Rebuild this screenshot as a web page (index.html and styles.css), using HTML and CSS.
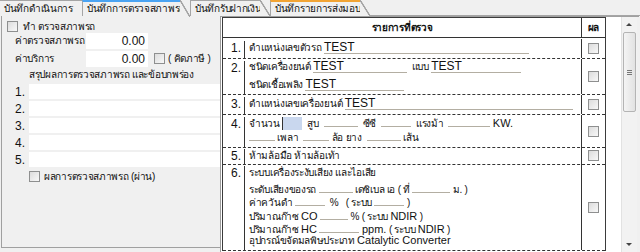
FILE: index.html
```html
<!DOCTYPE html>
<html lang="th">
<head>
    <meta charset="UTF-8">
    <title>บันทึกการตรวจสภาพรถ</title>
    <link rel="stylesheet" href="styles.css">
</head>
<body>

    <div class="tabs">
        <div class="tab tab-first">บันทึกดำเนินการ</div>
        <div class="tab tab-active">บันทึกการตรวจสภาพรถ</div>
        <div class="tab tab-third">บันทึกรับฝากเงิน</div>
        <div class="tab tab-last">บันทึกรายการส่งมอบ</div>
    </div>

    <div class="main">
        <!-- left side: fees and summary -->
        <div class="left">
            <div class="check-row">
                <span class="box"></span>
                <span>ทำ ตรวจสภาพรถ</span>
            </div>
            <div class="fee-row">
                <span class="fee-label">ค่าตรวจสภาพรถ</span>
                <span class="money">0.00</span>
            </div>
            <div class="fee-row">
                <span class="fee-label">ค่าบริการ</span>
                <span class="money">0.00</span>
                <span class="box box-tax"></span>
                <span>( คิดภาษี )</span>
            </div>
            <div class="summary-title">สรุปผลการตรวจสภาพรถ และข้อบกพร่อง</div>
            <div class="note-row"><span class="note-no">1.</span><span class="note"></span></div>
            <div class="note-row"><span class="note-no">2.</span><span class="note"></span></div>
            <div class="note-row"><span class="note-no">3.</span><span class="note"></span></div>
            <div class="note-row"><span class="note-no">4.</span><span class="note"></span></div>
            <div class="note-row"><span class="note-no">5.</span><span class="note"></span></div>
            <div class="check-row pass-row">
                <span class="box"></span>
                <span>ผลการตรวจสภาพรถ (ผ่าน)</span>
            </div>
        </div>

        <!-- right side: inspection sheet -->
        <div class="right">
            <div class="sheet">
                <div class="grid">
                    <div class="row row-head">
                        <div class="head-title">รายการที่ตรวจ</div>
                        <div class="res">ผล</div>
                    </div>
                    <div class="row row-1">
                        <div class="no">1.</div>
                        <div class="txt">
                            <div class="line">ตำแหน่งเลขตัวรถ <span class="u w205">TEST</span></div>
                        </div>
                        <div class="res"><span class="box"></span></div>
                    </div>
                    <div class="row row-2">
                        <div class="no">2.</div>
                        <div class="txt">
                            <div class="line">ชนิดเครื่องยนต์ <span class="u w94">TEST</span> <span class="gap-l">แบบ</span> <span class="u w90">TEST</span></div>
                            <div class="line">ชนิดเชื้อเพลิง <span class="u w99">TEST</span></div>
                        </div>
                        <div class="res"><span class="box"></span></div>
                    </div>
                    <div class="row row-3">
                        <div class="no">3.</div>
                        <div class="txt">
                            <div class="line">ตำแหน่งเลขเครื่องยนต์ <span class="u w228">TEST</span></div>
                        </div>
                        <div class="res"><span class="box"></span></div>
                    </div>
                    <div class="row row-4">
                        <div class="no">4.</div>
                        <div class="txt">
                            <div class="line">จำนวน <span class="cyl"></span> &nbsp;สูบ &nbsp;<span class="u w34"></span> &nbsp;ซีซี &nbsp;<span class="u w30"></span> &nbsp;แรงม้า &nbsp;<span class="u w42"></span> <span class="en">KW.</span></div>
                            <div class="line"><span class="u w26"></span> เพลา &nbsp;<span class="u w26"></span> ล้อ ยาง &nbsp;<span class="u w34"></span> เส้น</div>
                        </div>
                        <div class="res"><span class="box"></span></div>
                    </div>
                    <div class="row row-5">
                        <div class="no">5.</div>
                        <div class="txt">
                            <div class="line">ห้ามล้อมือ ห้ามล้อเท้า</div>
                        </div>
                        <div class="res"><span class="box"></span></div>
                    </div>
                    <div class="row row-6">
                        <div class="no">6.</div>
                        <div class="txt">
                            <div class="line">ระบบเครื่องระงับเสียง และไอเสีย</div>
                            <div class="line">ระดับเสียงของรถ <span class="u w34"></span> เดซิเบล เอ ( ที่ <span class="u w38"></span> ม. )</div>
                            <div class="line">ค่าควันดำ <span class="u w30"></span> &nbsp;% &nbsp;&nbsp;( ระบบ <span class="u w30"></span> )</div>
                            <div class="line">ปริมาณก๊าซ <span class="en">CO</span> <span class="u w28"></span> % ( ระบบ <span class="en">NDIR</span> )</div>
                            <div class="line">ปริมาณก๊าซ <span class="en">HC</span> <span class="u w40"></span> <span class="en">ppm.</span> ( ระบบ <span class="en">NDIR</span> )</div>
                            <div class="line">อุปกรณ์ขจัดมลพิษประเภท <span class="en">Catalytic Converter</span></div>
                        </div>
                        <div class="res"><span class="box"></span></div>
                    </div>
                </div>
            </div>
            <div class="vscroll">
                <div class="arrow arrow-up"></div>
                <div class="thumb"><span class="grip"></span></div>
                <div class="track"></div>
                <div class="arrow arrow-down"></div>
            </div>
        </div>
    </div>

</body>
</html>
```

FILE: styles.css
```css
body {
    margin: 0;
    width: 640px;
    height: 252px;
    overflow: hidden;
    background-color: #f0f0f0;
    font-family: Tahoma, "Liberation Sans", "Noto Sans", sans-serif;
    font-size: 10px;
    letter-spacing: -0.3px;
    color: #111;
    white-space: nowrap;
}
.en {
    font-size: 11px;
    letter-spacing: 0;
}

/* tab strip */
.tabs {
    display: flex;
    height: 16px;
    box-sizing: border-box;
    border-bottom: 1px solid #a5a5a5;
}
.tab {
    position: relative;
    height: 16px;
    box-sizing: border-box;
    padding-left: 4px;
    line-height: 15px;
    border-top: 1px solid #a5a5a5;
    border-left: 1px solid #a5a5a5;
    background-color: #f0f0f0;
}
.tab::after {
    content: "";
    position: absolute;
    top: -1px;
    right: -10px;
    width: 10px;
    height: 16px;
    background: linear-gradient(to top right, #f0f0f0 calc(50% - 1px), #a5a5a5 calc(50% - 0.5px), #a5a5a5 calc(50% + 0.5px), transparent calc(50% + 1px));
}
.tab-first {
    width: 82px;
    border-left: none;
}
.tab-first::after {
    display: none;
}
.tab-active {
    width: 98px;
    height: 16px;
    margin-bottom: -1px;
    border-top: 2px solid #4aa3f2;
    line-height: 14px;
    z-index: 2;
}
.tab-active::after {
    top: -2px;
    height: 17px;
}
.tab-third {
    width: 70px;
    margin-left: 10px;
}
.tab-last {
    width: 90px;
    margin-left: 10px;
    border-top: 2px solid #f2a434;
    line-height: 14px;
}
.tab-last::after {
    top: -2px;
}

.main {
    display: flex;
    height: 236px;
}

/* left panel */
.left {
    width: 219px;
    height: 232px;
    margin-left: 1px;
    border-left: 1px solid #a0a0a0;
    border-bottom: 1px solid #a0a0a0;
    padding-top: 4px;
    box-sizing: border-box;
}
.box {
    display: inline-block;
    width: 11px;
    height: 11px;
    box-sizing: border-box;
    border: 1px solid #8e8f8f;
    background: linear-gradient(135deg, #dcdcdc, #f8f8f8);
}
.check-row {
    display: flex;
    align-items: center;
    gap: 5px;
    height: 12px;
    padding-left: 5px;
}
.fee-row {
    display: flex;
    align-items: center;
    height: 17px;
    margin-bottom: 1px;
    padding-left: 13px;
}
.fee-label {
    width: 71px;
}
.money {
    width: 62px;
    height: 16px;
    line-height: 16px;
    padding-right: 3px;
    box-sizing: border-box;
    background-color: #fff;
    text-align: right;
    font-size: 12px;
    letter-spacing: 0;
}
.box-tax {
    margin: 0 3px 0 6px;
}
.summary-title {
    height: 14px;
    line-height: 14px;
    padding-left: 27px;
}
.note-row {
    display: flex;
    align-items: center;
    height: 15px;
    margin-top: 2px;
}
.note-no {
    width: 27px;
    padding-left: 13px;
    box-sizing: border-box;
    font-size: 12px;
    letter-spacing: 0;
}
.note {
    width: 192px;
    height: 15px;
    background-color: #fff;
}
.pass-row {
    margin-top: 3px;
    padding-left: 27px;
    gap: 4px;
}

/* right panel */
.right {
    display: flex;
    width: 419px;
    border-top: 1px solid #a0a0a0;
    border-left: 1px solid #9c9c9c;
    box-sizing: border-box;
}
.sheet {
    width: 401px;
    background-color: #fff;
    padding-left: 1px;
    box-sizing: border-box;
    overflow: hidden;
}
.grid {
    width: 384px;
    border: 1px solid #3b3b3b;
    border-bottom: none;
    box-sizing: border-box;
}
.row {
    display: grid;
    grid-template-columns: 22px 336px 24px;
    box-sizing: border-box;
    border-bottom: 1px dashed #333;
}
.row-head {
    grid-template-columns: 358px 24px;
    height: 20px;
    border-bottom: 1px solid #333;
    line-height: 19px;
    font-weight: bold;
}
.head-title {
    text-align: center;
}
.line {
    height: 14px;
    line-height: 14px;
}
.row-1 { height: 21px; padding-top: 3px; }
.row-2 { height: 36px; padding-top: 2px; }
.row-2 .line { height: 18px; }
.row-2 .txt { margin-top: -1px; }
.row-3 { height: 20px; padding-top: 2px; }
.row-4 { height: 33px; padding-top: 2px; }
.row-4 .txt { margin-top: -3px; }
.row-5 { height: 17px; padding-top: 1px; }
.row-6 { height: 86px; padding-top: 1px; }
.row-6 .line { height: 13.5px; line-height: 13.5px; }

.no {
    border-right: 1px solid #333;
    text-align: right;
    padding-right: 3px;
    font-size: 12px;
    letter-spacing: 0;
    line-height: 14px;
}
.txt {
    padding-left: 4px;
    overflow: hidden;
}
.res {
    border-left: 1px solid #333;
    display: flex;
    align-items: center;
    justify-content: center;
    margin-top: -2px;
}
.row-head .res {
    margin-top: 0;
}

.u {
    display: inline-block;
    height: 12px;
    line-height: 12px;
    vertical-align: baseline;
    border-bottom: 1px solid #b3aea2;
    font-size: 12px;
    letter-spacing: 0;
}
.gap-l {
    margin-left: 2px;
}
.w26 { width: 26px; }
.w28 { width: 28px; }
.w30 { width: 30px; }
.w34 { width: 34px; }
.w38 { width: 38px; }
.w40 { width: 40px; }
.w42 { width: 42px; }
.w90 { width: 90px; }
.w94 { width: 94px; }
.w99 { width: 99px; }
.w205 { width: 205px; }
.w228 { width: 228px; }

.cyl {
    display: inline-block;
    width: 20px;
    height: 13px;
    vertical-align: -3px;
    background-color: #c9d7ee;
    border-left: 1px solid #333;
    box-sizing: border-box;
}

/* scroll bar */
.vscroll {
    display: flex;
    flex-direction: column;
    width: 15px;
    margin-right: 2px;
    border-left: 1px solid #e2e2e2;
    background-color: #f2f2f2;
}
.arrow {
    height: 15px;
    position: relative;
}
.arrow::after {
    content: "";
    position: absolute;
    left: 4px;
    top: 6px;
    border-left: 3px solid transparent;
    border-right: 3px solid transparent;
}
.arrow-up::after {
    border-bottom: 3px solid #444;
}
.arrow-down::after {
    border-top: 3px solid #444;
}
.thumb {
    height: 78px;
    margin: 0 1px;
    border: 1px solid #b4b4b4;
    border-radius: 2px;
    background: linear-gradient(to right, #f4f4f4, #e2e2e2);
    display: flex;
    align-items: center;
    justify-content: center;
}
.grip {
    width: 5px;
    height: 5px;
    border-top: 1px solid #777;
    border-bottom: 1px solid #777;
    box-sizing: border-box;
    position: relative;
}
.grip::after {
    content: "";
    position: absolute;
    left: 0;
    right: 0;
    top: 1px;
    border-top: 1px solid #777;
}
.track {
    flex: 1;
}
```
